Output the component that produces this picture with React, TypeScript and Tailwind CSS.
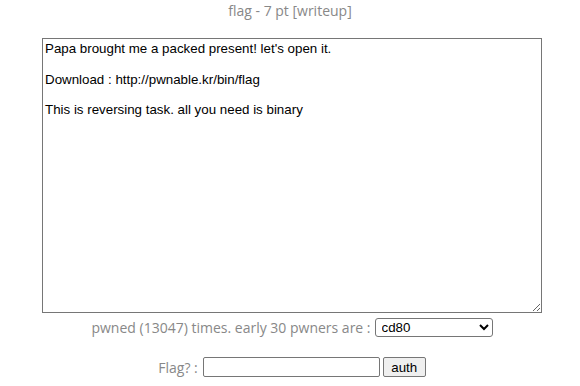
import { useState } from "react";

// pwnable.kr style challenge popup: title, description box, pwner list, flag form
export default function App() {
  const [flag, setFlag] = useState("");
  const [desc, setDesc] = useState(
    "Papa brought me a packed present! let's open it.\n\nDownload : http://pwnable.kr/bin/flag\n\nThis is reversing task. all you need is binary"
  );

  return (
    <div className="w-[580px] h-[386px] bg-white flex flex-col items-center text-[#888888] font-['Open_Sans',sans-serif] text-[14px]">
      <div className="h-[22px] leading-[22px]">flag - 7 pt [writeup]</div>

      <textarea
        value={desc}
        onChange={(e) => setDesc(e.target.value)}
        className="mt-[16px] ml-[4px] w-[500px] h-[275px] border border-[#767676] bg-white px-[2px] py-[2px] text-black font-['Liberation_Sans',Arial,sans-serif] text-[13.33px] leading-[15.3px] resize-y outline-none"
      />

      <div className="mt-[5px] h-[19px] flex items-center gap-[4px] ml-[4px]">
        <span>pwned (13047) times. early 30 pwners are :</span>
        <select className="w-[118px] h-[19px] border border-[#767676] rounded-[3px] bg-white text-black font-['Liberation_Sans',Arial,sans-serif] text-[13.33px] pl-[2px]">
          <option>cd80</option>
        </select>
      </div>

      <div className="mt-[20px] h-[20px] flex items-center ml-[4px]">
        <span className="mr-[5px]">Flag? : </span>
        <input
          value={flag}
          onChange={(e) => setFlag(e.target.value)}
          className="w-[177px] h-[20px] border border-[#767676] rounded-[2px] bg-white text-black font-['Liberation_Sans',Arial,sans-serif] text-[13.33px] px-[2px] outline-none"
        />
        <button className="ml-[3px] w-[43px] h-[20px] border border-[#767676] rounded-[2px] bg-[#efefef] text-black font-['Liberation_Sans',Arial,sans-serif] text-[13.33px]">
          auth
        </button>
      </div>
    </div>
  );
}
